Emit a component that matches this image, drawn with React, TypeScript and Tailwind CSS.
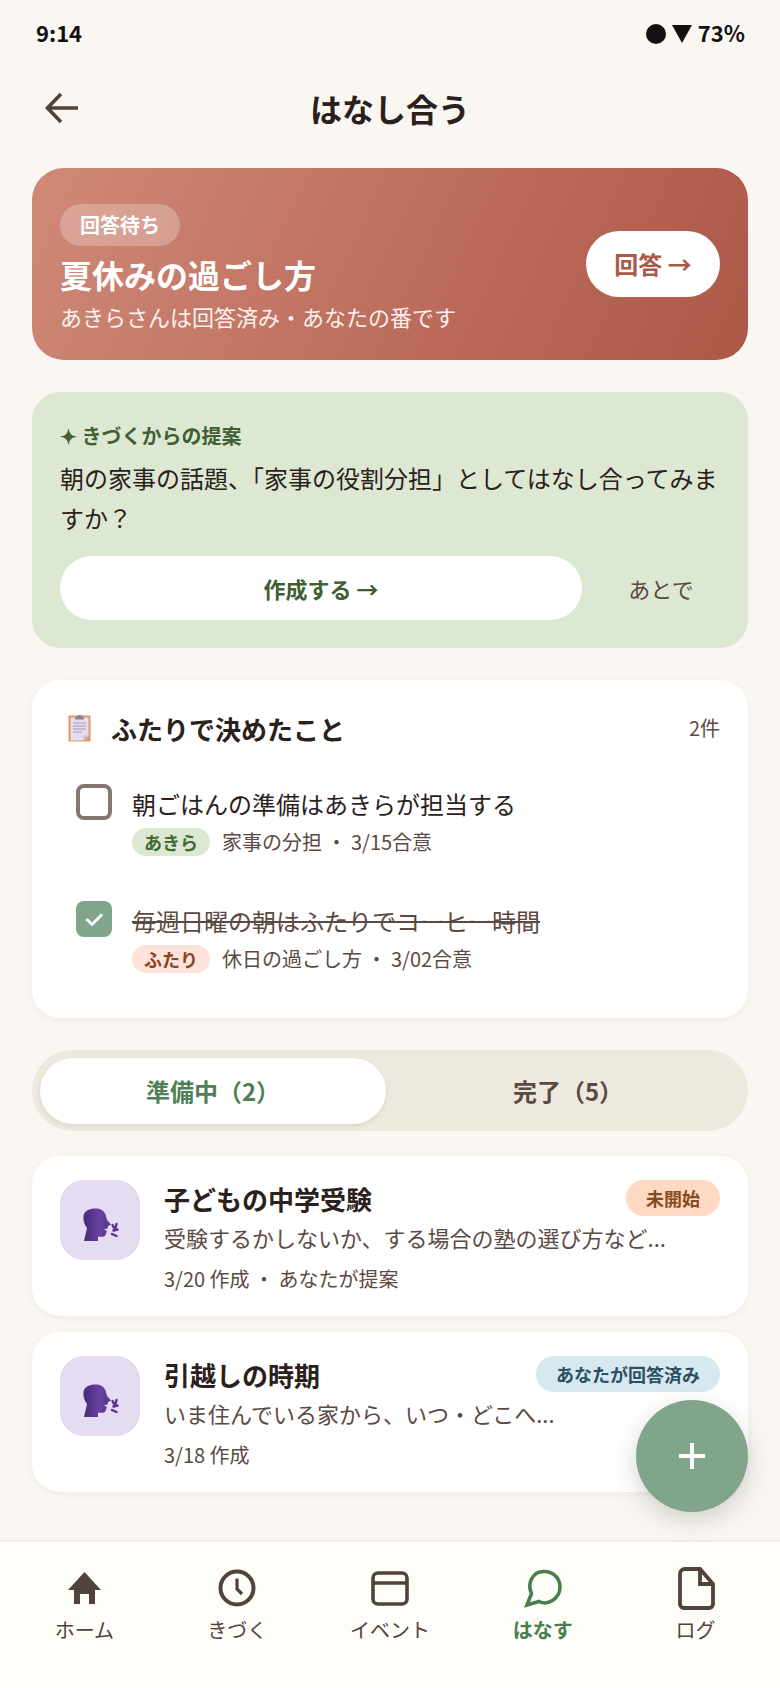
import type { FC } from 'react';

const FONT = "font-['Noto_Sans_CJK_JP','Noto_Sans',sans-serif]";

const SpeakingHead: FC = () => (
  <svg width="60" height="60" viewBox="0 0 60 60" aria-hidden="true">
    <defs>
      <linearGradient id="head" x1="0" y1="0" x2="1" y2="0">
        <stop offset="0" stopColor="#472a78" />
        <stop offset="0.6" stopColor="#6a42a2" />
        <stop offset="1" stopColor="#54338a" />
      </linearGradient>
    </defs>
    <path
      d="M14 51l3-13c-4-5-4-12-3-14 2-5 9-6 13-5.500 5 .5 8 3.500 9 7.500l1 4 4 4.500-3 1.500-.5 2.500-3.500 1 3 1.500-1.500 4c-.5 2-3.500 2-7.500 1.500V51z"
      fill="url(#head)"
    />
    <g stroke="#54338a" strokeWidth="2.400" strokeLinecap="round">
      <path d="M42.500 35l1.500 3" />
      <path d="M46.500 34l-1 3.500" />
      <path d="M43.500 40.500l4-1" />
      <path d="M42 44l4.500 2" />
    </g>
  </svg>
);

const Clipboard: FC = () => (
  <svg width="24" height="28" viewBox="0 0 24 28" aria-hidden="true">
    <rect x="0.500" y="1.500" width="22" height="26" fill="#dc9a68" />
    <path d="M2.500 3.500h18v18l-5 5h-13z" fill="#e5dcf2" />
    <path d="M15.500 26.500l5-5h-5z" fill="#c9bcdf" />
    <path d="M7 3.500l2-1.500c.5-1.500 4.500-1.500 5 0l2 1.500v2H7z" fill="#8d8499" />
    <g stroke="#a59bb5" strokeWidth="1">
      <path d="M5 9h13M5 12h13M5 15h13M5 18h9" />
    </g>
  </svg>
);

const Check: FC = () => (
  <svg width="20" height="20" viewBox="0 0 20 20" fill="none" aria-hidden="true">
    <path d="M2.500 10l5.500 5.500L18 5.500" stroke="#fff" strokeWidth="3" />
  </svg>
);

const DecisionRow: FC<{
  done?: boolean;
  text: string;
  who: string;
  badge: string;
  meta: string;
}> = ({ done, text, who, badge, meta }) => (
  <div className="flex gap-5 pl-4">
    {done ? (
      <div className="flex h-9 w-9 shrink-0 items-center justify-center rounded-lg bg-[#81a58a]">
        <Check />
      </div>
    ) : (
      <div className="h-9 w-9 shrink-0 rounded-lg border-4 border-[#857570]" />
    )}
    <div className="flex flex-col gap-[7px] pt-[3px]">
      <p className={`text-2xl leading-[34px] ${done ? 'text-[#5b4a44] line-through decoration-2' : 'text-[#2a201c]'}`}>{text}</p>
      <div className="flex items-center gap-3 text-xl leading-7 text-[#5b4a44]">
        <span className={`flex h-7 w-[78px] items-center justify-center rounded-full text-lg font-bold ${badge}`}>{who}</span>
        <span>{meta}</span>
      </div>
    </div>
  </div>
);

const TopicCard: FC<{
  title: string;
  desc: string;
  meta: string;
  status: string;
  statusClass: string;
}> = ({ title, desc, meta, status, statusClass }) => (
  <div className="flex h-40 gap-6 rounded-[28px] bg-white pl-7 pr-7 pt-6 shadow-[0_2px_6px_rgba(70,50,30,0.06)]">
    <div className="flex h-20 w-20 shrink-0 items-center justify-center rounded-3xl bg-[#e5dcf1]">
      <SpeakingHead />
    </div>
    <div className="min-w-0 flex-1">
      <div className="flex items-start justify-between">
        <h3 className="mt-[-1px] text-[26px] font-bold leading-10 text-[#2a201c]">{title}</h3>
        <span className={`flex h-9 items-center rounded-full px-5 text-lg font-bold ${statusClass}`}>{status}</span>
      </div>
      <p className="mt-[-2px] text-[22px] leading-10 text-[#5b4a44]">{desc}</p>
      <p className="mt-1 text-xl leading-9 text-[#5b4a44]">{meta}</p>
    </div>
  </div>
);

const NAV = [
  {
    label: 'ホーム',
    icon: (
      <svg width="40" height="40" viewBox="0 0 40 40" fill="#52423d">
        <path d="M20.500 4L37 22h-6v14h-6V26h-9v10h-6V22H4z" />
      </svg>
    ),
  },
  {
    label: 'きづく',
    icon: (
      <svg width="40" height="40" viewBox="0 0 40 40" fill="none" stroke="#52423d" strokeWidth="4">
        <circle cx="20" cy="20" r="16.500" />
        <path d="M20 10.500v10.500l5 5" strokeWidth="3.200" />
      </svg>
    ),
  },
  {
    label: 'イベント',
    icon: (
      <svg width="40" height="40" viewBox="0 0 40 40" fill="none" stroke="#52423d" strokeWidth="3.600">
        <rect x="3" y="5" width="34" height="31" rx="5" />
        <path d="M3 15h34" />
      </svg>
    ),
  },
  {
    label: 'はなす',
    active: true,
    icon: (
      <svg width="40" height="40" viewBox="0 0 40 40" fill="none" stroke="#46804f" strokeWidth="3.600">
        <path d="M8.500 25.500C4 16 9 3.500 21 3.500c9.500 0 16 7 16 15.500 0 11.500-12 19-21 14.500L4 37z" strokeLinejoin="miter" />
      </svg>
    ),
  },
  {
    label: 'ログ',
    icon: (
      <svg width="40" height="44" viewBox="0 0 40 44" fill="none" stroke="#52423d" strokeWidth="3.800">
        <path d="M9 3h15l13 15v20a4 4 0 0 1-4 4H8a4 4 0 0 1-4-4V8a5 5 0 0 1 5-5z" />
        <path d="M24 3v15h13" />
      </svg>
    ),
  },
];

export default function App() {
  return (
    <div className={`relative flex h-[1688px] w-[780px] flex-col overflow-hidden bg-[#faf7f2] ${FONT}`}>
      {/* status bar */}
      <div className="flex h-[68px] items-center justify-between pb-1 pl-9 pr-[35px] text-[22px] font-bold text-[#111]">
        <span>9:14</span>
        <div className="flex items-center gap-[6px]">
          <span className="mt-1 h-5 w-5 rounded-full bg-[#111]" />
          <svg className="mt-1" width="20" height="18" viewBox="0 0 20 18" fill="#111" aria-hidden="true">
            <path d="M0 0h20L10 18z" />
          </svg>
          <span>73%</span>
        </div>
      </div>

      {/* header */}
      <header className="relative flex h-20 items-center justify-center">
        <svg className="absolute left-11 top-[22px]" width="36" height="36" viewBox="0 0 36 36" fill="none" stroke="#52423d" strokeWidth="3.600" aria-hidden="true">
          <path d="M34 18H4M17 4L3.500 18 17 32" />
        </svg>
        <h1 className="text-[32px] font-bold text-[#2a201c]">はなし合う</h1>
      </header>

      <main className="flex flex-1 flex-col px-8 pt-5">
        {/* waiting for answer */}
        <section className="flex h-48 items-center justify-between rounded-[32px] bg-[linear-gradient(115deg,#cf8a78,#bf6f5e_50%,#ab5847)] pl-7 pr-7">
          <div className="flex flex-col items-start pt-[10px]">
            <span className="flex h-[42px] w-[120px] items-center justify-center rounded-full bg-white/25 text-xl font-bold text-white">回答待ち</span>
            <h2 className="mt-[5px] text-[32px] font-bold leading-[46px] text-white">夏休みの過ごし方</h2>
            <p className="mt-[1px] text-[22px] leading-9 text-white/90">あきらさんは回答済み・あなたの番です</p>
          </div>
          <button className="flex h-[66px] w-[134px] items-center justify-center rounded-full bg-white text-2xl font-bold text-[#a85a48]">回答 →</button>
        </section>

        {/* suggestion */}
        <section className="mt-8 h-64 rounded-[28px] bg-[#dde8d3] px-7 pt-7">
          <p className="text-xl font-bold leading-8 text-[#3f5f35]">✦ きづくからの提案</p>
          <p className="mt-[6px] text-2xl leading-10 text-[#2a201c]">朝の家事の話題、「家事の役割分担」としてはなし合ってみますか？</p>
          <div className="mt-[18px] flex items-center">
            <button className="flex h-16 w-[522px] items-center justify-center rounded-full bg-white text-[22px] font-bold text-[#3f5f35]">作成する →</button>
            <button className="flex-1 pl-5 text-[22px] text-[#5b4a44]">あとで</button>
          </div>
        </section>

        {/* decided together */}
        <section className="mt-8 h-[338px] rounded-[28px] bg-white px-7 pt-[30px] shadow-[0_2px_6px_rgba(70,50,30,0.06)]">
          <div className="flex h-9 items-center justify-between">
            <div className="flex items-center gap-[19px]">
              <span className="pl-2">
                <Clipboard />
              </span>
              <h2 className="text-[26px] font-bold text-[#2a201c]">ふたりで決めたこと</h2>
            </div>
            <span className="text-xl text-[#5b4a44]">2件</span>
          </div>
          <div className="mt-[38px] flex flex-col gap-[45px]">
            <DecisionRow text="朝ごはんの準備はあきらが担当する" who="あきら" badge="bg-[#dde8d3] text-[#3f6a35]" meta="家事の分担 ・ 3/15合意" />
            <DecisionRow done text="毎週日曜の朝はふたりでコーヒー時間" who="ふたり" badge="bg-[#fde3da] text-[#8a4426]" meta="休日の過ごし方 ・ 3/02合意" />
          </div>
        </section>

        {/* tabs */}
        <div className="mt-8 flex h-[81px] items-center rounded-full bg-[#ede9df] p-2">
          <button className="h-[66px] w-[346px] rounded-full bg-white text-2xl font-bold text-[#4f8058] shadow-[0_2px_4px_rgba(70,50,30,0.1)]">準備中（2）</button>
          <button className="ml-[10px] flex-1 text-2xl font-bold text-[#5b4a44]">完了（5）</button>
        </div>

        {/* topics */}
        <div className="mt-[25px] flex flex-col gap-4">
          <TopicCard title="子どもの中学受験" desc="受験するかしないか、する場合の塾の選び方など..." meta="3/20 作成 ・ あなたが提案" status="未開始" statusClass="bg-[#ffd9c4] text-[#8a4a20]" />
          <TopicCard title="引越しの時期" desc="いま住んでいる家から、いつ・どこへ..." meta="3/18 作成" status="あなたが回答済み" statusClass="bg-[#d7e8f1] text-[#2c4f63]" />
        </div>
      </main>

      {/* new topic */}
      <button className="absolute left-[636px] top-[1400px] flex h-28 w-28 items-center justify-center rounded-full bg-[#81a58a] shadow-[0_8px_24px_rgba(60,70,50,0.22)]">
        <svg width="28" height="28" viewBox="0 0 28 28" fill="#fff" aria-hidden="true">
          <path d="M12 1h4v11h11v4H16v11h-4V16H1v-4h11z" />
        </svg>
      </button>

      {/* bottom nav */}
      <nav className="grid h-[148px] grid-cols-5 border-t-2 border-[#f2efe9] bg-[#fffdf8] px-2 pt-6">
        {NAV.map((item) => (
          <div key={item.label} className="flex flex-col items-center">
            <div className="flex h-11 items-center justify-center">{item.icon}</div>
            <span className={`mt-1 text-xl leading-8 ${item.active ? 'font-bold text-[#46804f]' : 'text-[#52423d]'}`}>{item.label}</span>
          </div>
        ))}
      </nav>
    </div>
  );
}
